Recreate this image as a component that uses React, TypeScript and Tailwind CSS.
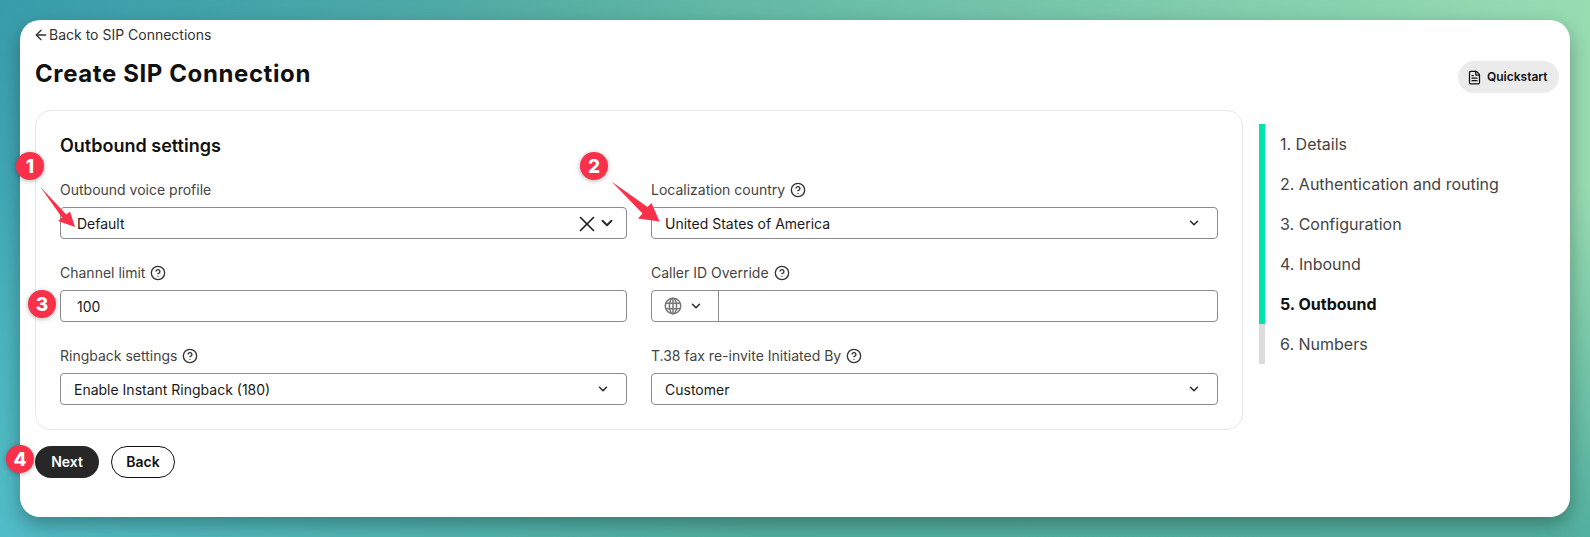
import { ArrowLeft, ChevronDown, CircleHelp, FileText, X } from "lucide-react";

const steps = ["1. Details", "2. Authentication and routing", "3. Configuration", "4. Inbound", "5. Outbound", "6. Numbers"];

function Label({ text, help }: { text: string; help?: boolean }) {
  return (
    <div className="mb-[7px] flex h-5 items-center gap-[5px] text-sm leading-5 text-[#444444]">
      <span>{text}</span>
      {help && <CircleHelp size={16} strokeWidth={2} className="text-[#333333]" />}
    </div>
  );
}

function SelectBox({ value }: { value: string }) {
  return (
    <div className="flex h-8 items-center justify-between rounded-[4px] border border-[#8a8a8a] pr-4 pl-[13px] text-sm text-[#1a1a1a]">
      <span className="pt-[2px]">{value}</span>
      <ChevronDown size={14} strokeWidth={2.5} className="text-[#272727]" />
    </div>
  );
}

function Badge({ n, className }: { n: number; className: string }) {
  return (
    <div
      className={`absolute flex h-7 w-7 items-center justify-center rounded-full bg-[#f8304a] text-[19px] leading-none font-extrabold text-white shadow-[0_1px_5px_rgba(0,0,0,0.3)] ${className}`}
    >
      {n}
    </div>
  );
}

export default function App() {
  return (
    <div className="relative h-[537px] w-[1590px] overflow-hidden bg-[linear-gradient(90deg,#2e8f9e_0%,#62b8a5_45%,#98dcb2_100%)] p-5 font-['Inter',sans-serif]">
      <div className="absolute inset-0 bg-[linear-gradient(180deg,rgba(82,176,160,0)_0%,rgba(82,176,160,0)_35%,#52b09f_100%)]" />
      <div className="absolute inset-0 bg-[radial-gradient(circle_at_0%_100%,#50bcc8_0%,rgba(80,188,200,0)_45%)]" />
      <div className="relative flex h-[497px] flex-col rounded-[20px] bg-white pr-[11px] pl-[15px] shadow-[0_8px_20px_rgba(0,0,0,0.3)]">
        <a className="mt-[5px] flex h-5 items-center text-sm leading-5 text-[#333333]">
          <ArrowLeft size={16} strokeWidth={2} className="-ml-[2px]" />
          <span>Back to SIP Connections</span>
        </a>

        <div className="mt-4 flex h-8 items-center justify-between">
          <h1 className="pb-[6px] text-2xl leading-8 font-bold tracking-[0.6px] text-[#111111]">Create SIP Connection</h1>
          <button className="flex h-8 w-[101px] items-center gap-[5px] rounded-full bg-[#ebebeb] pl-[9px] text-xs font-semibold text-[#111111]">
            <FileText size={15} strokeWidth={2} />
            Quickstart
          </button>
        </div>

        <div className="mt-[17px] flex items-start gap-4">
          <div className="w-[1208px] rounded-2xl border border-[#e8e8e8] p-6">
            <h2 className="mb-[23px] text-lg leading-[22px] font-semibold text-[#111111]">Outbound settings</h2>
            <div className="grid grid-cols-2 gap-x-6 gap-y-6">
              <div>
                <Label text="Outbound voice profile" />
                <div className="flex h-8 items-center justify-between rounded-[4px] border border-[#8a8a8a] pr-[10px] pl-4 text-sm text-[#1a1a1a]">
                  <span className="pt-[2px]">Default</span>
                  <div className="flex items-center gap-[2px]">
                    <X size={26} strokeWidth={1.5} className="-mr-[4px] translate-y-px text-[#1a1a1a]" />
                    <ChevronDown size={18} strokeWidth={2.5} className="text-[#272727]" />
                  </div>
                </div>
              </div>
              <div>
                <Label text="Localization country" help />
                <SelectBox value="United States of America" />
              </div>
              <div>
                <Label text="Channel limit" help />
                <div className="flex h-8 items-center rounded-[4px] border border-[#8a8a8a] pl-4 text-sm text-[#1a1a1a]">
                  <span className="pt-[2px]">100</span>
                </div>
              </div>
              <div>
                <Label text="Caller ID Override" help />
                <div className="flex h-8 items-center rounded-[4px] border border-[#8a8a8a]">
                  <div className="flex h-full w-[67px] items-center gap-[7px] border-r border-[#8a8a8a] pl-3">
                    <svg width="18" height="18" viewBox="0 0 18 18" fill="none" stroke="#777777" strokeWidth="1.5">
                      <circle cx="9" cy="9" r="7.75" />
                      <ellipse cx="9" cy="9" rx="3.6" ry="7.75" />
                      <path d="M9 1.25v15.5M1.9 6.2h14.2M1.9 11.8h14.2" />
                    </svg>
                    <ChevronDown size={14} strokeWidth={2.5} className="text-[#272727]" />
                  </div>
                </div>
              </div>
              <div>
                <Label text="Ringback settings" help />
                <SelectBox value="Enable Instant Ringback (180)" />
              </div>
              <div>
                <Label text="T.38 fax re-invite Initiated By" help />
                <SelectBox value="Customer" />
              </div>
            </div>
          </div>

          <ol className="mt-[14px] w-[290px]">
            {steps.map((step, i) => (
              <li
                key={step}
                className={`flex h-10 items-center border-l-[6px] pl-[15px] text-base ${i < 5 ? "border-[#00e3aa]" : "border-[#dcdcdc]"} ${i === 4 ? "font-bold text-[#111111]" : "text-[#444444]"}`}
              >
                {step}
              </li>
            ))}
          </ol>
        </div>

        <div className="mt-4 flex gap-3">
          <button className="h-8 w-16 rounded-full bg-[#272727] text-sm font-semibold text-white">Next</button>
          <button className="h-8 w-16 rounded-full border border-[#111111] bg-white text-sm font-semibold text-[#111111]">Back</button>
        </div>
      </div>

      {/* annotation arrows */}
      <svg className="absolute top-[170px] left-[30px]" width="60" height="65" viewBox="30 170 60 65">
        <polygon points="40,186.5 66.3,214.5 70,211.5 75,227 58,221 62,217.5" fill="#f8304a" />
      </svg>
      <svg className="absolute top-[170px] left-[600px]" width="70" height="60" viewBox="600 170 70 60">
        <polygon points="611.5,181.5 647.5,207 651.5,203 659.5,221.5 638,218.5 642.5,213.5" fill="#f8304a" />
      </svg>

      <Badge n={1} className="top-[152px] left-4" />
      <Badge n={2} className="top-[152px] left-[580px]" />
      <Badge n={3} className="top-[290px] left-[28px]" />
      <Badge n={4} className="top-[445px] left-[6px]" />
    </div>
  );
}
